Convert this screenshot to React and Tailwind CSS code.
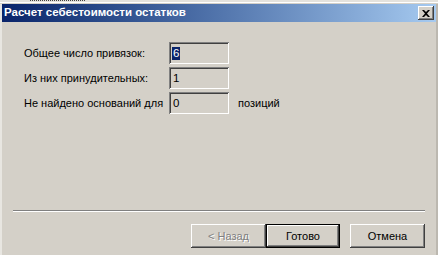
import React from "react";

const raised =
  "shadow-[inset_-1px_-1px_#404040,inset_1px_1px_#ffffff,inset_-2px_-2px_#808080,inset_2px_2px_#d4d0c8]";
const sunken =
  "shadow-[inset_1px_1px_#808080,inset_-1px_-1px_#ffffff,inset_2px_2px_#404040,inset_-2px_-2px_#d4d0c8]";

const Field = ({ label, value, selected, suffix }) => (
  <div className="flex items-center h-[22px] whitespace-nowrap">
    <span className="w-[145px] shrink-0">{label}</span>
    <div className={`w-[60px] h-[22px] bg-[#d4d0c8] flex items-center pl-[3px] text-[11.5px] ${sunken}`}>
      {selected ? (
        <span className="bg-[#0a246a] text-white leading-[13px] px-[1px]">{value}</span>
      ) : (
        <span className="leading-[13px] px-[1px]">{value}</span>
      )}
    </div>
    {suffix && <span className="ml-[9px]">{suffix}</span>}
  </div>
);

const Button = ({ children, disabled, isDefault }) => {
  if (isDefault) {
    return (
      <div className="w-[76px] h-[24px] border border-black">
        <div className={`w-full h-full flex items-center justify-center ${raised}`}>
          {children}
        </div>
      </div>
    );
  }
  return (
    <div className={`w-[75px] h-[24px] flex items-center justify-center ${raised}`}>
      {disabled ? (
        <span className="text-[#808080] [text-shadow:1px_1px_0_#ffffff]">{children}</span>
      ) : (
        children
      )}
    </div>
  );
};

export default function App() {
  return (
    <div className="w-[438px] h-[255px] flex flex-col bg-[#d4d0c8] text-black text-[11px] font-['Liberation_Sans',Arial,sans-serif] overflow-hidden">
      {/* cut-off window behind */}
      <div className="h-[2px] bg-[#e4e2dd] relative">
        <div className="absolute left-[30px] top-0 w-[55px] h-[1px] border-t border-dotted border-[#404040]" />
      </div>
      <div className="h-[1px] bg-white" />
      <div className="h-[1px] bg-[#d4d0c8]" />

      <div className="flex-1 flex flex-col border-l-2 border-r-2 border-l-[#e8e6e1] border-r-[#bcb8b0]">
        <div className="h-[18px] flex items-center justify-between bg-gradient-to-r from-[#0a246a] to-[#a6caf0] pl-[2px] pr-[2px]">
          <span className="text-white font-bold text-[11.5px] whitespace-nowrap">
            Расчет себестоимости остатков
          </span>
          <div className={`w-[16px] h-[14px] bg-[#d4d0c8] flex items-center justify-center ${raised}`}>
            <svg width="8" height="7" viewBox="0 0 8 7">
              <path d="M0 0h2l2 2 2-2h2L5 3.5 8 7H6L4 5 2 7H0l3-3.5z" fill="#000" />
            </svg>
          </div>
        </div>

        <div className="flex flex-col gap-[3px] pl-[22px] pt-[20px]">
          <Field label="Общее число привязок:" value="6" selected />
          <Field label="Из них принудительных:" value="1" />
          <Field label="Не найдено оснований для" value="0" suffix="позиций" />
        </div>

        <div className="mt-auto mx-[11px] mb-[7px]">
          <div className="h-[1px] bg-[#808080]" />
          <div className="h-[1px] bg-white" />
          <div className="flex items-center mt-[12px]">
            <div className="ml-[178px]">
              <Button disabled>&lt; Назад</Button>
            </div>
            <Button isDefault>Готово</Button>
            <div className="ml-[10px]">
              <Button>Отмена</Button>
            </div>
          </div>
        </div>
      </div>
    </div>
  );
}
